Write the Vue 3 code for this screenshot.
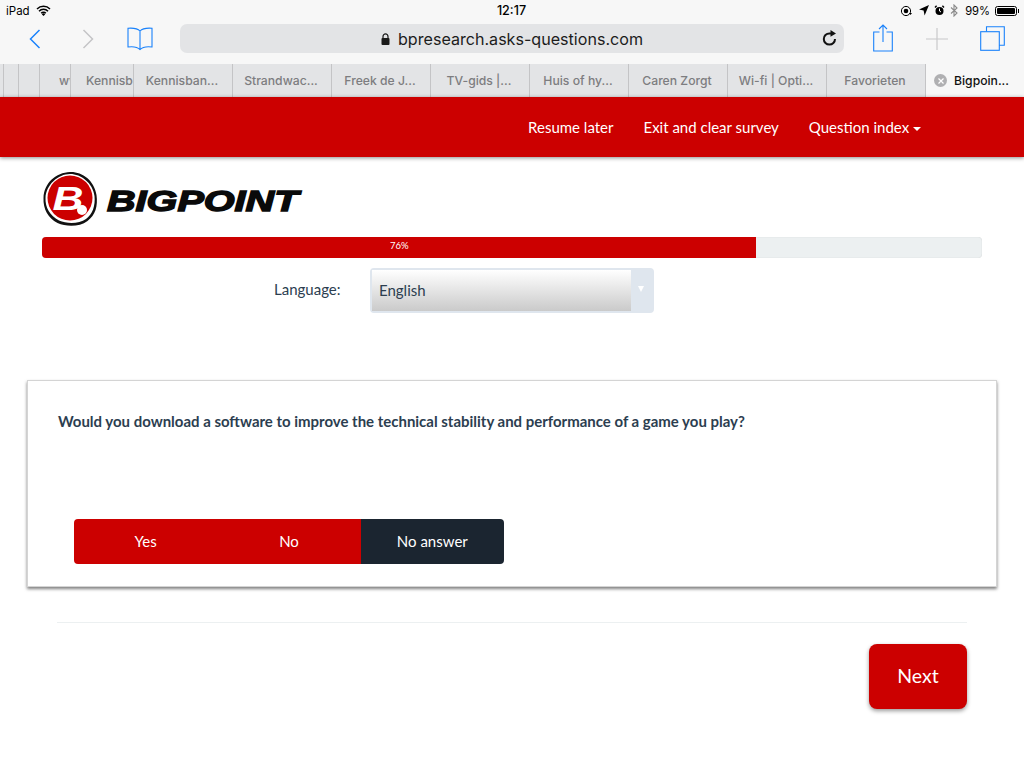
<script setup>
const tabs = [
  { w: 4, t: "" },
  { w: 15, t: "" },
  { w: 21, t: "" },
  { w: 31, t: "wv", cls: "clip-a" },
  { w: 63, t: "Kennisb", cls: "clip-b" },
  { w: 99, t: "Kennisban..." },
  { w: 99, t: "Strandwac..." },
  { w: 99, t: "Freek de J..." },
  { w: 99, t: "TV-gids |..." },
  { w: 99, t: "Huis of hy..." },
  { w: 99, t: "Caren Zorgt" },
  { w: 99, t: "Wi-fi | Opti..." },
  { w: 99, t: "Favorieten" },
];
</script>

<template>
  <div class="page">
    <header class="safari">
      <div class="status">
        <div class="status-left">
          <span>iPad</span>
          <svg class="wifi" width="15" height="11" viewBox="0 0 15 11">
            <path d="M1 4a9.2 9.2 0 0 1 13 0M3 6.2a6 6 0 0 1 9 0M5.2 8.2a3 3 0 0 1 4.6 0" fill="none" stroke="#000" stroke-width="1.5" />
            <path d="M7.5 11 5.8 9.2a2.4 2.4 0 0 1 3.4 0z" />
          </svg>
        </div>
        <span class="clock">12:17</span>
        <div class="status-right">
          <svg width="12" height="12" viewBox="0 0 12 12">
            <circle cx="6" cy="6" r="4.6" fill="none" stroke="#000" stroke-width="1" />
            <circle cx="6" cy="6" r="2.3" />
            <path d="M9 8h3l-1.5 2z" />
          </svg>
          <svg class="gap-a" width="10" height="11" viewBox="0 0 10 11"><path d="M10 0 5.6 10.5 4.6 5.4 0 4.4z" /></svg>
          <svg class="gap-b" width="11" height="11" viewBox="0 0 11 11">
            <circle cx="5.5" cy="6" r="4" />
            <path d="M1 2.4 2.6.8M10 2.4 8.4.8" stroke="#000" stroke-width="1.4" />
            <path d="M5.5 3.5V6l1.5 1" stroke="#fff" fill="none" />
          </svg>
          <svg class="gap-c" width="8" height="13" viewBox="0 0 8 13">
            <path d="M1 3.5 7 9l-3 3V1l3 3-6 5.5" fill="none" stroke="#8a8a8a" stroke-width="1.100" />
          </svg>
          <span class="batt-text">99%</span>
          <span class="battery"><span class="battery-fill"></span></span>
        </div>
      </div>

      <div class="toolbar">
        <svg class="back" width="12" height="20" viewBox="0 0 12 20"><path d="M10.5 1 1.5 10l9 9" fill="none" stroke="#1a82fb" stroke-width="1.5" /></svg>
        <svg class="forward" width="12" height="20" viewBox="0 0 12 20"><path d="M1.5 1l9 9-9 9" fill="none" stroke="#c4c4c6" stroke-width="1.5" /></svg>
        <svg class="book" width="26" height="24" viewBox="0 0 26 24">
          <path d="M13 4C11 1.800 6 .8 1 1.200V20c5-.6 9.500 0 12 2.500C15.500 20 20 19.400 25 20V1.200C20 .8 15 1.800 13 4zM13 4v18.500" fill="none" stroke="#1a82fb" stroke-width="1.100" />
        </svg>
        <div class="url">
          <svg class="lock" width="9" height="12" viewBox="0 0 9 12">
            <rect x="0.500" y="5" width="8" height="7" rx="1" fill="#1a1a1a" />
            <path d="M2 5.500V3.400a2.500 2.500 0 0 1 5 0v2.100" fill="none" stroke="#1a1a1a" stroke-width="1.200" />
          </svg>
          <span>bpresearch.asks-questions.com</span>
          <svg class="reload" width="15" height="16" viewBox="0 0 15 16">
            <path d="M13 9a5.600 5.600 0 1 1-5.600-5.600h2" fill="none" stroke="#111" stroke-width="2" />
            <path d="M8.500 0 14 3.400 8.500 6.800z" fill="#111" />
          </svg>
        </div>
        <svg class="share" width="20" height="28" viewBox="0 0 20 28">
          <path d="M6.500 8H.7v19h18.600V8h-5.800M10 18V1M6 5l4-4 4 4" fill="none" stroke="#1a82fb" stroke-width="1.100" />
        </svg>
        <svg class="plus" width="22" height="22" viewBox="0 0 22 22"><path d="M11 0v22M0 11h22" stroke="#c8c8ca" stroke-width="1.200" /></svg>
        <svg class="tabs-icon" width="25" height="25" viewBox="0 0 25 25">
          <path d="M6.500 5.500V.7h17.800v18.600H19" fill="none" stroke="#1a82fb" stroke-width="1.100" />
          <rect x="0.700" y="5.700" width="18.600" height="18.600" fill="none" stroke="#1a82fb" stroke-width="1.100" />
        </svg>
      </div>

      <div class="tabs">
        <div v-for="(tab, i) in tabs" :key="i" class="tab" :class="tab.cls" :style="{ width: tab.w + 'px' }">
          <span>{{ tab.t }}</span>
        </div>
        <div class="tab-active">
          <span class="tab-close">
            <svg width="6" height="6" viewBox="0 0 6 6"><path d="M.5.5l5 5M5.500.5l-5 5" stroke="#fff" stroke-width="1.200" /></svg>
          </span>
          <span>Bigpoin...</span>
        </div>
      </div>
    </header>

    <nav class="navbar">
      <a>Resume later</a>
      <a>Exit and clear survey</a>
      <a>Question index <span class="caret"></span></a>
    </nav>

    <main class="content">
      <div class="logo">
        <svg width="56" height="56" viewBox="0 0 56 56">
          <path d="M28 1C40 .5 52 9 54.500 24c1.500 11-1 20-9 26-8 6-21 6-30 2C6 47 1 38 1.500 27 2 12 14 1.500 28 1z" fill="#111" />
          <path d="M28 3C39 3 51 12 52.500 25c1 10-2 18-8.500 23-7 5-19 5-27 1.500C8 45 3 36 3.500 27 4 14 16 3 28 3z" fill="#fff" />
          <circle cx="28" cy="27" r="22.500" fill="#cc0000" />
          <text transform="translate(26 39) scale(1.300 1)" text-anchor="middle" class="logo-b">B</text>
          <circle cx="40" cy="39" r="5" fill="#fff" />
        </svg>
        <span class="logo-word">BIGPOINT</span>
      </div>

      <div class="progress">
        <div class="progress-bar" :style="{ width: '76%' }">76%</div>
      </div>

      <div class="lang-row">
        <label>Language:</label>
        <div class="select">
          <span class="select-value">English</span>
          <span class="select-arrow"></span>
        </div>
      </div>

      <section class="card">
        <h2>Would you download a software to improve the technical stability and performance of a game you play?</h2>
        <div class="answers">
          <button class="answer">Yes</button>
          <button class="answer">No</button>
          <button class="answer dark">No answer</button>
        </div>
      </section>

      <div class="footer">
        <button class="next">Next</button>
      </div>
    </main>
  </div>
</template>

<style>
html, body {
  margin: 0;
  background: #fff;
}
</style>

<style scoped>
.page {
  width: 1024px;
  height: 768px;
  overflow: hidden;
  font-family: Lato, sans-serif;
  color: #2c3e50;
  background: #fff;
}

.safari {
  background: #f7f7f7;
  font-family: Inter, sans-serif;
  color: #000;
}

.status {
  height: 21px;
  padding: 0 7px 0 6px;
  display: grid;
  grid-template-columns: 1fr auto 1fr;
  align-items: center;
  font-size: 11.500px;
}

.status-left {
  display: flex;
  align-items: center;
}

.wifi {
  margin-left: 6px;
}

.clock {
  font-size: 12.600px;
  font-weight: 500;
}

.status-right {
  display: flex;
  align-items: center;
  justify-content: flex-end;
}

.gap-a { margin-left: 7px; }
.gap-b { margin-left: 5px; }
.gap-c { margin-left: 5px; }

.batt-text {
  margin-left: 7px;
  font-size: 11.200px;
}

.battery {
  margin-left: 5px;
  width: 22px;
  height: 10px;
  border: 1px solid #000;
  border-radius: 2.500px;
  padding: 1px;
  box-sizing: border-box;
  display: block;
  position: relative;
}

.battery::after {
  content: "";
  position: absolute;
  right: -3px;
  top: 2px;
  width: 1.500px;
  height: 4px;
  background: #000;
}

.battery-fill {
  display: block;
  height: 100%;
  background: #000;
  border-radius: 1px;
}

.toolbar {
  height: 43px;
  box-sizing: border-box;
  padding-bottom: 8px;
  display: flex;
  align-items: center;
  position: relative;
}

.back { margin-left: 29px; }
.forward { margin-left: 41px; }
.book { margin-left: 33px; }

.url {
  margin-left: 27px;
  width: 664px;
  height: 29px;
  background: #e3e4e6;
  border-radius: 7px;
  display: flex;
  align-items: center;
  justify-content: center;
  position: relative;
  font-size: 16.100px;
  color: #1c1c1c;
  gap: 8px;
}

.reload {
  position: absolute;
  right: 7px;
  top: 6px;
}

.share { margin-left: 29px; margin-bottom: 2px; }
.plus { margin-left: 33px; }
.tabs-icon { margin-left: 32px; }

.tabs {
  height: 33px;
  display: flex;
  background: #e3e4e6;
  font-size: 12.200px;
  font-weight: 500;
  color: #7d7d80;
}

.tab {
  box-sizing: border-box;
  border-right: 1px solid #c4c4c6;
  padding-right: 2px;
  display: flex;
  align-items: center;
  justify-content: center;
  overflow: hidden;
  white-space: nowrap;
}

.tab.clip-a { justify-content: flex-start; padding: 0 0 0 19px; }
.tab.clip-b { justify-content: flex-start; padding: 0 0 0 15px; }

.tab-active {
  flex: 1;
  background: #f7f7f7;
  color: #111;
  display: flex;
  align-items: center;
  padding-left: 8px;
  gap: 7px;
}

.tab-close {
  width: 13px;
  height: 13px;
  border-radius: 50%;
  background: #b0b0b2;
  display: flex;
  align-items: center;
  justify-content: center;
}

.navbar {
  height: 60px;
  background: #cc0000;
  box-shadow: 0 1px 4px rgba(0, 0, 0, 0.45);
  display: flex;
  justify-content: flex-end;
  align-items: center;
  gap: 30px;
  padding-right: 103px;
  font-size: 15px;
  color: #fff;
  position: relative;
}

.caret {
  display: inline-block;
  width: 0;
  height: 0;
  vertical-align: middle;
  border-top: 4px solid #fff;
  border-left: 4px solid transparent;
  border-right: 4px solid transparent;
}

.content {
  padding: 0 27px;
}

.logo {
  margin: 13px 0 0 15px;
  height: 58px;
  display: flex;
  align-items: center;
  gap: 9px;
}

.logo-b {
  font-family: "Liberation Sans", sans-serif;
  font-weight: 700;
  font-style: italic;
  font-size: 33px;
  fill: #fff;
}

.logo-word {
  margin-top: 4px;
  font-family: "Liberation Sans", sans-serif;
  font-weight: 700;
  font-style: italic;
  font-size: 29px;
  color: #0a0a0a;
  -webkit-text-stroke: 1.400px #0a0a0a;
  transform: scaleX(1.365);
  transform-origin: left center;
}

.progress {
  margin: 9px 15px 0;
  height: 21px;
  background: #ecf0f1;
  border-radius: 4px;
  overflow: hidden;
  box-shadow: inset 0 0 1px rgba(0, 0, 0, 0.2);
}

.progress-bar {
  height: 100%;
  background: #cc0000;
  color: #fff;
  font-size: 9.500px;
  line-height: 18px;
  text-align: center;
}

.lang-row {
  margin-top: 10px;
  display: flex;
  align-items: center;
  height: 45px;
}

.lang-row label {
  margin-left: 247px;
  width: 96px;
  padding-bottom: 3px;
  font-size: 15px;
}

.select {
  width: 284px;
  height: 45px;
  box-sizing: border-box;
  border: 2px solid #dfe6ee;
  border-radius: 4px;
  background: #dfe6ee;
  display: flex;
}

.select-value {
  flex: 1;
  background: linear-gradient(#fff, #cacaca);
  padding-left: 7px;
  font-size: 15px;
  line-height: 40px;
}

.select-arrow {
  width: 21px;
  position: relative;
}

.select-arrow::after {
  content: "";
  position: absolute;
  left: 7px;
  top: 16px;
  border-top: 6px solid #fff;
  border-left: 3.500px solid transparent;
  border-right: 3.500px solid transparent;
}

.card {
  margin-top: 67px;
  width: 970px;
  height: 207px;
  box-sizing: border-box;
  padding: 30px 30px 0;
  background: #fff;
  border: 1px solid #d4d4d4;
  box-shadow: 0 2px 3px rgba(0, 0, 0, 0.5);
}

.card h2 {
  margin: 0;
  font-size: 14.980px;
  line-height: 20px;
  font-weight: 700;
}

.answers {
  margin: 88px 0 0 16px;
  display: flex;
  width: 430px;
  height: 45px;
  border-radius: 4px;
  overflow: hidden;
}

.answer {
  flex: 1;
  border: 0;
  padding: 0 0 2px;
  background: #cc0000;
  color: #fff;
  font-family: Lato, sans-serif;
  font-size: 15px;
}

.answer.dark {
  background: #1b2530;
}

.footer {
  margin: 35px 30px 0;
  border-top: 1px solid #ecf0f1;
  padding-top: 21px;
  display: flex;
  justify-content: flex-end;
}

.next {
  width: 98px;
  height: 65px;
  padding: 0 0 2px;
  border: 0;
  border-radius: 8px;
  background: #cc0000;
  color: #fff;
  font-family: Lato, sans-serif;
  font-size: 19.500px;
  box-shadow: 0 2px 4px rgba(0, 0, 0, 0.4);
}
</style>
